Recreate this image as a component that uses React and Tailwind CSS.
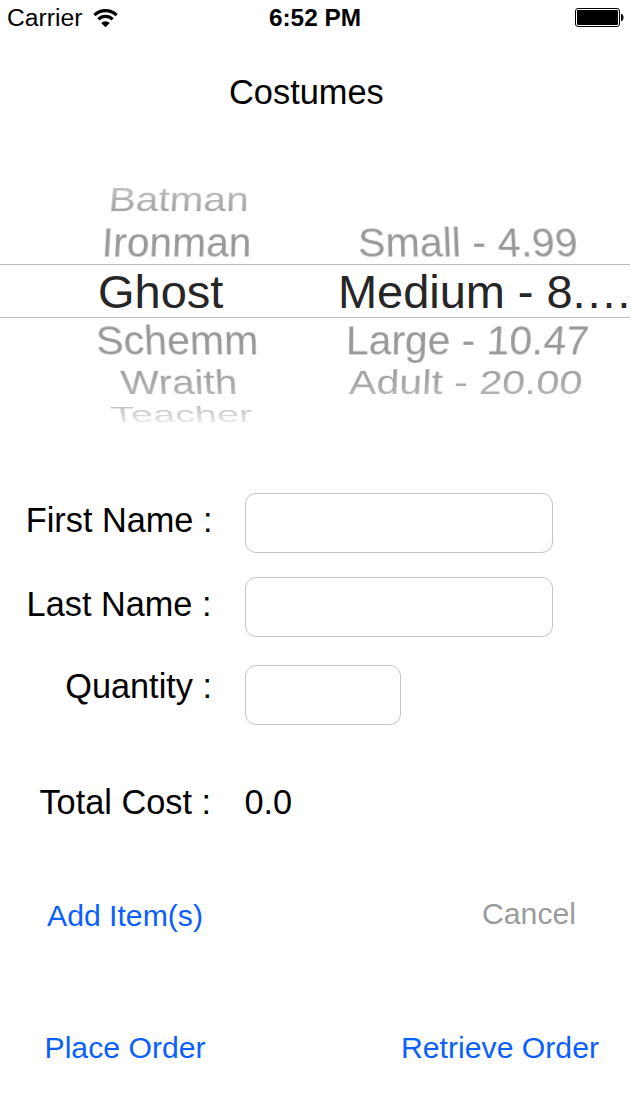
const labelText = "text-[34.3px] whitespace-nowrap";

function WifiIcon() {
  return (
    <svg className="ml-[10px] h-[20px] w-[27px]" viewBox="0 0 27 20" fill="none">
      <path d="M2.4 7.2A15.8 15.8 0 0 1 24.6 7.2" stroke="#000" strokeWidth="3.2" />
      <path d="M6.4 11.3A10.1 10.1 0 0 1 20.6 11.3" stroke="#000" strokeWidth="3.2" />
      <path d="M13.5 19.2L9.200 15A6.100 6.100 0 0 1 17.800 15Z" fill="#000" />
    </svg>
  );
}

function BatteryIcon() {
  return (
    <svg className="h-[19px] w-[49px]" viewBox="0 0 49 19">
      <rect x="0.5" y="0.5" width="44" height="18" rx="2.5" fill="none" stroke="#000" />
      <rect x="2" y="2" width="41" height="15" rx="1" fill="#000" />
      <path d="M46 6h1c2 1.5 2 5.500 0 7h-1z" fill="#000" />
    </svg>
  );
}

function WheelRow({ className, left, leftClass, right, rightClass }) {
  return (
    <div className={`flex w-[630px] shrink-0 items-center overflow-visible whitespace-nowrap text-[42px] text-[#999] ${className}`}>
      <div className="w-[336px] shrink-0">
        <span className={`inline-block origin-left ${leftClass}`}>{left}</span>
      </div>
      {right && <span className={`inline-block origin-left ${rightClass}`}>{right}</span>}
    </div>
  );
}

function Field({ label, className, labelClass, inputClass }) {
  return (
    <div className={`flex h-[60px] ${className}`}>
      <label className={`text-right ${labelText} ${labelClass}`}>{label}</label>
      <input className={`ml-auto h-[60px] rounded-[11px] border border-[#c3c3c3] bg-white px-4 text-3xl outline-none ${inputClass}`} />
    </div>
  );
}

export default function App() {
  return (
    <main className="flex h-[1094px] w-[630px] flex-col overflow-hidden bg-white font-['Liberation_Sans',Arial,sans-serif] text-black">
      <header className="grid h-[35px] shrink-0 grid-cols-3 items-center text-[24.7px] leading-[35px]">
        <div className="flex items-center pl-[7px]">
          <span>Carrier</span>
          <WifiIcon />
        </div>
        <span className="text-center text-[24.4px] font-bold">6:52 PM</span>
        <div className="flex justify-end pr-[6px]">
          <BatteryIcon />
        </div>
      </header>

      <h1 className="mt-[37px] h-[40px] shrink-0 pl-[229px] text-[34.4px] leading-[41px]">Costumes</h1>

      <section className="mt-[66px] h-[248px] shrink-0 overflow-hidden">
        <div className="[mask-image:linear-gradient(to_bottom,rgba(0,0,0,.5),rgba(0,0,0,.92)_40%,#000_50%)]">
          <WheelRow
            className="h-[43px] leading-[43px] [transform:perspective(1700px)_rotateX(37deg)]"
            left="Batman"
            leftClass="ml-[109px] scale-x-[.965]"
          />
          <WheelRow
            className="h-[43px] leading-[44px] [transform:perspective(940px)_rotateX(15deg)]"
            left="Ironman"
            leftClass="ml-[102px] scale-x-[.97]"
            right="Small - 4.99"
            rightClass="ml-[22px] scale-x-[.98]"
          />
        </div>
        <div className="flex h-[54px] items-center overflow-hidden border-y border-[#bcbcbc] text-[47px] leading-[53px] whitespace-nowrap text-[#262626]">
          <div className="w-[336px] shrink-0 pl-[98px]">Ghost</div>
          <span className="shrink-0 pl-[2px] tracking-[-0.05px]">Medium - 8.…</span>
        </div>
        <div className="[mask-image:linear-gradient(to_bottom,#000_45%,rgba(0,0,0,.75)_70%,rgba(0,0,0,.6)_82%,rgba(0,0,0,.15))]">
          <WheelRow
            className="h-[44px] leading-[45px] [transform:perspective(940px)_rotateX(-15deg)]"
            left="Schemm"
            leftClass="ml-[95.5px] scale-x-[.98]"
            right="Large - 10.47"
            rightClass="ml-[10px] scale-x-[.973]"
          />
          <WheelRow
            className="h-[41px] leading-[42px] [transform:perspective(1700px)_rotateX(-37deg)]"
            left="Wraith"
            leftClass="ml-[121px] scale-x-[.965]"
            right="Adult - 20.00"
            rightClass="ml-[13px] scale-x-[.98]"
          />
          <WheelRow
            className="h-[23px] leading-[24px] [transform:perspective(2000px)_rotateX(-58deg)]"
            left="Teacher"
            leftClass="ml-[111px] scale-x-[.945]"
          />
        </div>
      </section>

      <form className="mt-[67px] w-[553px] shrink-0">
        <Field label="First Name :" labelClass="w-[212.5px] leading-[55px]" inputClass="w-[308px]" />
        <Field label="Last Name :" className="mt-[24px]" labelClass="w-[211.5px] leading-[55px]" inputClass="w-[308px]" />
        <Field label="Quantity :" className="mt-[28px] w-[401px]" labelClass="w-[212px] leading-[43px]" inputClass="w-[156px]" />
      </form>

      <div className={`mt-[57px] flex h-[40px] shrink-0 leading-[41px] ${labelText}`}>
        <span className="w-[211px] text-right">Total Cost :</span>
        <span className="ml-[33.5px]">0.0</span>
      </div>

      <div className="mt-[73px] flex h-[41px] shrink-0 items-start justify-between pr-[54px] pl-[47px] text-[30.2px] text-[#0b5fff]">
        <button className="leading-[41px]">Add Item(s)</button>
        <button className="leading-[37px] text-[#9b9b9b]">Cancel</button>
      </div>

      <div className="mt-[91px] flex h-[41px] shrink-0 justify-between pr-[31px] pl-[44.500px] text-[30.2px] leading-[41px] text-[#0b5fff]">
        <button>Place Order</button>
        <button>Retrieve Order</button>
      </div>
    </main>
  );
}
